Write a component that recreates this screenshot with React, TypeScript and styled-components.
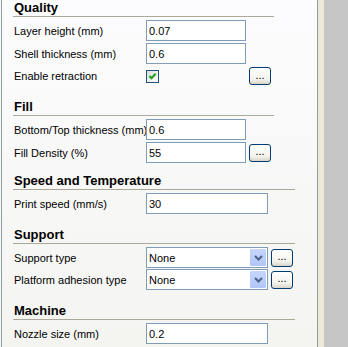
import React from "react"
import styled, { createGlobalStyle } from "styled-components"

const GlobalStyle = createGlobalStyle`
  html, body {
    margin: 0;
    padding: 0;
  }
  body {
    font-family: "Liberation Sans", Arial, sans-serif;
    font-size: 11px;
    color: #000;
  }
`

type Control = "text" | "check" | "select"

type RowSpec = {
  label: string
  control: Control
  value?: string
  width?: number
  more?: boolean
  height?: number
}

type SectionSpec = {
  title: string
  line: number
  top: number
  gap: number
  rows: RowSpec[]
}

const sections: SectionSpec[] = [
  {
    title: "Quality",
    line: 261,
    top: 1,
    gap: 2,
    rows: [
      { label: "Layer height (mm)", control: "text", value: "0.07", width: 100 },
      { label: "Shell thickness (mm)", control: "text", value: "0.6", width: 100 },
      { label: "Enable retraction", control: "check", width: 100, more: true, height: 20 },
    ],
  },
  {
    title: "Fill",
    line: 261,
    top: 14,
    gap: 2,
    rows: [
      { label: "Bottom/Top thickness (mm)", control: "text", value: "0.6", width: 100 },
      { label: "Fill Density (%)", control: "text", value: "55", width: 100, more: true },
    ],
  },
  {
    title: "Speed and Temperature",
    line: 282,
    top: 11,
    gap: 2,
    rows: [{ label: "Print speed (mm/s)", control: "text", value: "30", width: 122 }],
  },
  {
    title: "Support",
    line: 282,
    top: 14,
    gap: 1,
    rows: [
      { label: "Support type", control: "select", value: "None", width: 122, more: true },
      { label: "Platform adhesion type", control: "select", value: "None", width: 122, more: true },
    ],
  },
  {
    title: "Machine",
    line: 282,
    top: 14,
    gap: 2,
    rows: [{ label: "Nozzle size (mm)", control: "text", value: "0.2", width: 122 }],
  },
]

const CheckMark = () => (
  <svg width="11" height="11" viewBox="0 0 11 11">
    <path d="M2.5 5 L4.5 7.2 L8.6 2.8" fill="none" stroke="#21a121" strokeWidth="2.2" />
  </svg>
)

const Chevron = () => (
  <svg width="9" height="6" viewBox="0 0 9 6">
    <path d="M1 1 L4.5 4.5 L8 1" fill="none" stroke="#4d6185" strokeWidth="2" />
  </svg>
)

const renderControl = (row: RowSpec) => {
  if (row.control === "check") {
    return (
      <CheckCell $width={row.width || 100}>
        <CheckBox>
          <CheckMark />
        </CheckBox>
      </CheckCell>
    )
  }
  if (row.control === "select") {
    return (
      <Combo $width={row.width || 122}>
        <ComboText>{row.value}</ComboText>
        <ComboButton>
          <Chevron />
        </ComboButton>
      </Combo>
    )
  }
  return <TextBox $width={row.width || 100} value={row.value} readOnly />
}

const App = () => {
  return (
    <Frame>
      <GlobalStyle />
      <Panel>
        {sections.map(section => (
          <Section key={section.title}>
            <Header $width={section.line} $top={section.top}>
              {section.title}
            </Header>
            <Rows $gap={section.gap}>
              {section.rows.map(row => (
                <Row key={row.label} $height={row.height || 21}>
                  <Label>{row.label}</Label>
                  {renderControl(row)}
                  {row.more ? <MoreButton>...</MoreButton> : <span />}
                </Row>
              ))}
            </Rows>
          </Section>
        ))}
      </Panel>
      <Strip />
      <Backdrop />
    </Frame>
  )
}

export default App

const Frame = styled.div`
  display: flex;
  height: 100vh;
  padding-left: 1px;
  background: #f8f9fa;
  overflow: hidden;
`

const Panel = styled.div`
  box-sizing: border-box;
  width: 317px;
  flex: none;
  padding-left: 12px;
  border-left: 1px solid #919b9c;
  border-right: 1px solid #919b9c;
  background: linear-gradient(#fcfcfe, #f4f4f1);
`

const Strip = styled.div`
  width: 6px;
  flex: none;
  background: #ece9d8;
`

const Backdrop = styled.div`
  flex: 1;
  background: #c6c6c6;
`

const Section = styled.div`
  display: flex;
  flex-direction: column;
`

const Header = styled.div<{ $width: number; $top: number }>`
  box-sizing: border-box;
  width: ${p => p.$width}px;
  height: 16px;
  margin: ${p => p.$top}px 0 3px -1px;
  padding-left: 1px;
  font-size: 13px;
  font-weight: bold;
  line-height: 13px;
  border-bottom: 1px solid #aca899;
`

const Rows = styled.div<{ $gap: number }>`
  display: flex;
  flex-direction: column;
  gap: ${p => p.$gap}px;
`

const Row = styled.div<{ $height: number }>`
  display: grid;
  grid-template-columns: 129px auto auto;
  justify-content: start;
  align-items: center;
  column-gap: 3px;
  height: ${p => p.$height}px;
`

const Label = styled.span`
  white-space: nowrap;
  font-size: 11px;
`

const TextBox = styled.input<{ $width: number }>`
  box-sizing: border-box;
  width: ${p => p.$width}px;
  height: 21px;
  margin: 0;
  padding: 0 2px;
  border: 1px solid #7f9db9;
  background: #fff;
  font-family: "Liberation Sans", Arial, sans-serif;
  font-size: 11px;
  color: #000;
  outline: none;
`

const CheckCell = styled.span<{ $width: number }>`
  width: ${p => p.$width}px;
  display: flex;
  align-items: center;
`

const Combo = styled.div<{ $width: number }>`
  box-sizing: border-box;
  display: flex;
  align-items: stretch;
  width: ${p => p.$width}px;
  height: 21px;
  padding: 1px 1px 1px 0;
  border: 1px solid #7f9db9;
  background: #fff;
`

const ComboText = styled.span`
  flex: 1;
  display: flex;
  align-items: center;
  padding-left: 2px;
  font-size: 11px;
`

const ComboButton = styled.span`
  width: 16px;
  display: flex;
  align-items: center;
  justify-content: center;
  border-radius: 1px;
  background: linear-gradient(#c6d6fc, #b1c6f7);
`

const CheckBox = styled.span`
  box-sizing: border-box;
  width: 13px;
  height: 13px;
  display: flex;
  align-items: center;
  justify-content: center;
  border: 1px solid #1c5180;
  background: linear-gradient(135deg, #dcdcd7, #ffffff);
`

const MoreButton = styled.button`
  box-sizing: border-box;
  width: 22px;
  height: 18px;
  margin: 0;
  padding: 0 0 3px;
  border: 1px solid #003c74;
  border-radius: 3px;
  background: linear-gradient(#ffffff, #f3f2ec 70%, #d9d5c8);
  font-family: "Liberation Sans", Arial, sans-serif;
  font-size: 11px;
  line-height: 12px;
  color: #000;
`
